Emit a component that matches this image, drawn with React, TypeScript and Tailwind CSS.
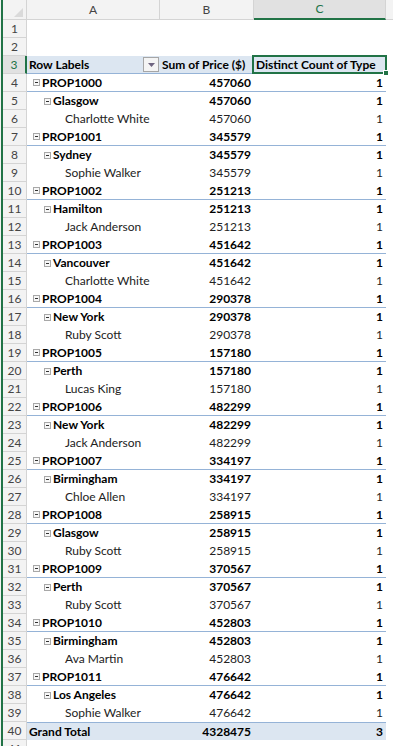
import React from "react";

type Row = { kind: "prop" | "city" | "name"; label: string; price: string; count: string };

const data: [string, string, string, string][] = [
  ["PROP1000", "457060", "Glasgow", "Charlotte White"],
  ["PROP1001", "345579", "Sydney", "Sophie Walker"],
  ["PROP1002", "251213", "Hamilton", "Jack Anderson"],
  ["PROP1003", "451642", "Vancouver", "Charlotte White"],
  ["PROP1004", "290378", "New York", "Ruby Scott"],
  ["PROP1005", "157180", "Perth", "Lucas King"],
  ["PROP1006", "482299", "New York", "Jack Anderson"],
  ["PROP1007", "334197", "Birmingham", "Chloe Allen"],
  ["PROP1008", "258915", "Glasgow", "Ruby Scott"],
  ["PROP1009", "370567", "Perth", "Ruby Scott"],
  ["PROP1010", "452803", "Birmingham", "Ava Martin"],
  ["PROP1011", "476642", "Los Angeles", "Sophie Walker"],
];

const rows: Row[] = data.flatMap(([p, v, c, n]) => [
  { kind: "prop", label: p, price: v, count: "1" },
  { kind: "city", label: c, price: v, count: "1" },
  { kind: "name", label: n, price: v, count: "1" },
]);

function Minus() {
  return (
    <span className="inline-flex items-center justify-center w-[7px] h-[7px] border border-[#a8a8a8] bg-[#f7f7f7] mr-[2px] shrink-0">
      <span className="block w-[3px] h-px bg-[#333]" />
    </span>
  );
}

function RowHead({ n, selected }: { n: number; selected?: boolean }) {
  return (
    <div
      className={
        "w-[24px] shrink-0 h-full flex items-center justify-center text-[12px] font-normal border-b border-[#d4d4d4] " +
        (selected
          ? "bg-[#e1e1e1] text-[#217346] border-r-2 border-r-[#217346]"
          : "bg-[#f3f3f3] text-[#444] border-r border-r-[#d4d4d4]")
      }
    >
      {n}
    </div>
  );
}

export default function App() {
  return (
    <div
      className="w-[393px] h-[746px] overflow-hidden bg-white flex"
      style={{ fontFamily: "Lato, 'Liberation Sans', sans-serif" }}
    >
      <div className="w-px shrink-0 bg-[#f3f3f3]" />
      <div className="w-[2px] shrink-0 bg-[#217346]" />
      <div className="flex-1 flex flex-col min-w-0">
        {/* Column headers */}
        <div className="h-[20px] shrink-0 flex text-[12px] text-[#444]">
          <div className="w-[24px] shrink-0 bg-[#f3f3f3] border-r border-b border-[#d4d4d4] relative">
            <svg className="absolute right-[3px] bottom-[2px]" width="9" height="9" viewBox="0 0 9 9">
              <polygon points="9,0 9,9 0,9" fill="#dadada" />
            </svg>
          </div>
          <div className="w-[133px] shrink-0 bg-[#f3f3f3] border-r border-b border-[#d4d4d4] flex items-center justify-center">A</div>
          <div className="w-[94px] shrink-0 bg-[#f3f3f3] border-r border-b border-[#d4d4d4] flex items-center justify-center">B</div>
          <div className="w-[132px] shrink-0 bg-[#e1e1e1] border-r border-r-[#d4d4d4] border-b-2 border-b-[#217346] flex items-center justify-center text-[#217346]">C</div>
          <div className="flex-1 bg-[#f3f3f3] border-b border-[#d4d4d4]" />
        </div>

        {/* Rows 1-2 */}
        {[1, 2].map((n) => (
          <div key={n} className="h-[18px] shrink-0 flex">
            <RowHead n={n} />
            <div className="flex-1" />
          </div>
        ))}

        {/* Row 3 header */}
        <div className="h-[18px] shrink-0 flex font-bold text-[12px] text-black">
          <RowHead n={3} selected />
          <div className="w-[133px] shrink-0 bg-[#dce6f1] border-b border-[#95b3d7] flex items-center pl-[2px] pr-px">
            <span className="flex-1">Row Labels</span>
            <span className="w-[16px] h-[15px] border border-[#a6a6a6] bg-[#f4f4f4] flex items-center justify-center">
              <svg width="7" height="4" viewBox="0 0 7 4">
                <polygon points="0,0 7,0 3.5,4" fill="#6e6480" />
              </svg>
            </span>
          </div>
          <div className="w-[94px] shrink-0 bg-[#dce6f1] border-b border-[#95b3d7] flex items-center pl-[2px] whitespace-nowrap overflow-visible">
            Sum of Price ($)
          </div>
          <div className="w-[132px] shrink-0 bg-[#dce6f1] border-b border-[#95b3d7] flex items-center pl-[2px] relative whitespace-nowrap">
            Distinct Count of Type
            <div className="absolute left-[-2px] top-[-1px] right-[-1px] bottom-[-1px] border-2 border-[#217346]" />
            <div className="absolute right-[-3px] bottom-[-3px] w-[6px] h-[6px] bg-[#217346] border border-white" />
          </div>
          <div className="flex-1" />
        </div>

        {/* Data rows */}
        {rows.map((r, i) => {
          const bold = r.kind !== "name";
          const pad = r.kind === "prop" ? "pl-[6px]" : r.kind === "city" ? "pl-[17px]" : "pl-[38px]";
          const line = r.kind === "prop" ? "border-b border-[#95b3d7]" : "";
          return (
            <div
              key={i}
              className={
                "h-[18px] shrink-0 flex text-[12px] " + (bold ? "font-bold text-black" : "font-normal text-[#222]")
              }
            >
              <RowHead n={i + 4} />
              <div className={"w-[133px] shrink-0 flex items-center whitespace-nowrap " + pad + " " + line}>
                {r.kind !== "name" && <Minus />}
                <span>{r.label}</span>
              </div>
              <div className={"w-[94px] shrink-0 flex items-center justify-end pr-[3px] " + line}>{r.price}</div>
              <div className={"w-[132px] shrink-0 flex items-center justify-end pr-[3px] " + line}>{r.count}</div>
              <div className="flex-1" />
            </div>
          );
        })}

        {/* Grand total */}
        <div className="h-[18px] shrink-0 flex text-[12px] font-bold text-black">
          <RowHead n={40} />
          <div className="w-[133px] shrink-0 bg-[#dce6f1] border-t border-[#95b3d7] flex items-center pl-[2px]">Grand Total</div>
          <div className="w-[94px] shrink-0 bg-[#dce6f1] border-t border-[#95b3d7] flex items-center justify-end pr-[3px]">4328475</div>
          <div className="w-[132px] shrink-0 bg-[#dce6f1] border-t border-[#95b3d7] flex items-center justify-end pr-[3px]">3</div>
          <div className="flex-1" />
        </div>

        <div className="h-[18px] shrink-0 flex">
          <RowHead n={41} />
          <div className="flex-1" />
        </div>
      </div>
    </div>
  );
}
